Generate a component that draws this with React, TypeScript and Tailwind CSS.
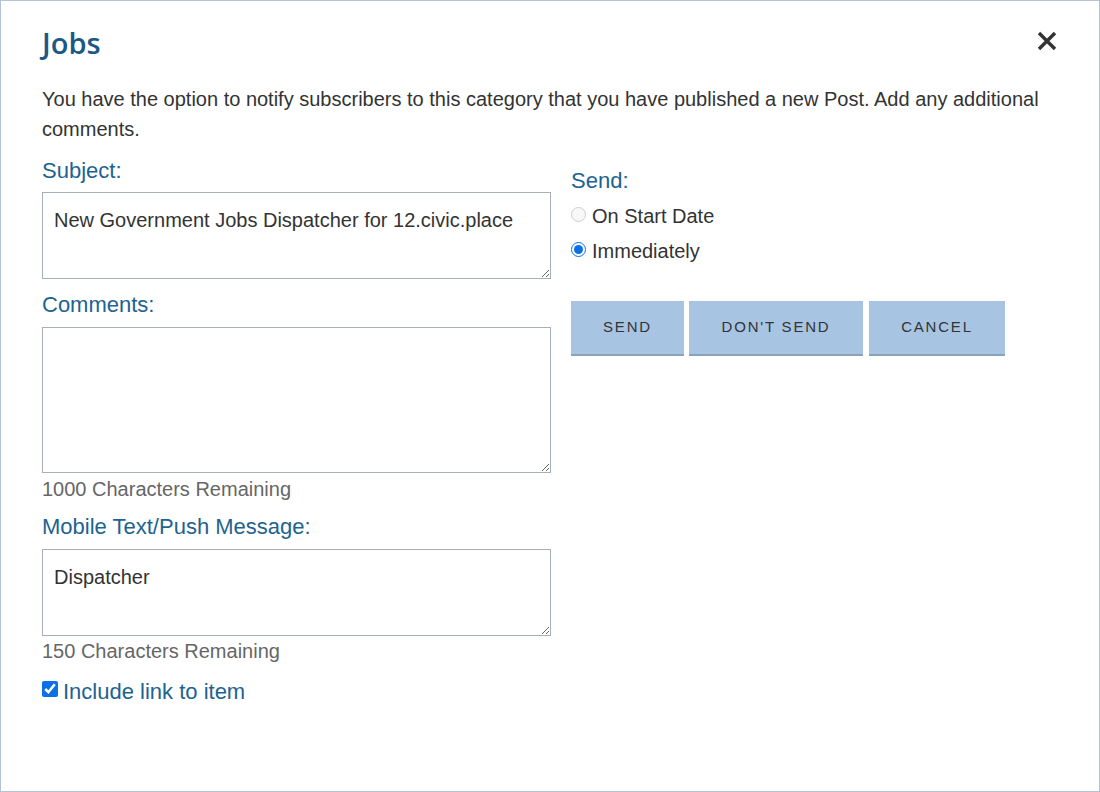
import React from "react";

const font = { fontFamily: '"Liberation Sans", Arial, sans-serif' };

function Area({ value, h }: { value: string; h: string }) {
  return (
    <textarea
      defaultValue={value}
      className={`block w-[509px] ${h} border border-[#a9aebb] px-[11px] py-[14px] text-[20px] leading-[26px] text-[#333] outline-none resize-y`}
      style={font}
    />
  );
}

export default function App() {
  return (
    <div className="w-[1100px] h-[792px] bg-white border border-[#b3c3d3] relative" style={font}>
      <div className="pl-[41px] pr-[40px] pt-[23px]">
        <div className="flex justify-between items-start">
          <h1 className="text-[29px] font-semibold text-[#1b5886] leading-[38px]" style={{ fontFamily: '"Open Sans", sans-serif' }}>Jobs</h1>
          <svg width="22" height="22" viewBox="0 0 22 22" className="mt-[6px] mr-[1px]">
            <path d="M3 3L19 19M19 3L3 19" stroke="#333" strokeWidth="3.4" strokeLinecap="butt" />
          </svg>
        </div>
        <p className="mt-[22px] text-[20px] leading-[30px] text-[#333]">
          You have the option to notify subscribers to this category that you have published a new Post. Add any additional comments.
        </p>
        <div className="flex gap-[20px] mt-[14px]">
          <div className="w-[509px]">
            <label className="block text-[22px] leading-[26px] text-[#1d6391] mb-[8px]">Subject:</label>
            <Area value="New Government Jobs Dispatcher for 12.civic.place" h="h-[87px]" />
            <label className="block text-[22px] leading-[26px] text-[#1d6391] mt-[13px] mb-[9px]">Comments:</label>
            <Area value="" h="h-[146px]" />
            <div className="text-[20px] leading-[24px] text-[#666] mt-[4px]">1000 Characters Remaining</div>
            <label className="block text-[22px] leading-[26px] text-[#1d6391] mt-[13px] mb-[9px]">Mobile Text/Push Message:</label>
            <Area value="Dispatcher" h="h-[87px]" />
            <div className="text-[20px] leading-[24px] text-[#666] mt-[3px]">150 Characters Remaining</div>
            <label className="flex items-center gap-[5px] mt-[16px] text-[22px] leading-[26px] text-[#1d6391]">
              <input type="checkbox" defaultChecked className="w-[16px] h-[16px] accent-[#0b6fe8] -mt-[6px] m-0" />
              Include link to item
            </label>
          </div>
          <div className="pt-[10px]">
            <div className="text-[22px] leading-[26px] text-[#1d6391]">Send:</div>
            <label className="flex items-center gap-[6px] mt-[10px] text-[20px] leading-[24px] text-[#333]">
              <input type="radio" name="s" disabled className="w-[15px] h-[15px] m-0 -mt-[3px]" />
              On Start Date
            </label>
            <label className="flex items-center gap-[6px] mt-[11px] text-[20px] leading-[24px] text-[#333]">
              <input type="radio" name="s" defaultChecked className="w-[15px] h-[15px] m-0 -mt-[3px] accent-[#0b6fe8]" />
              Immediately
            </label>
            <div className="flex gap-[5px] mt-[38px]">
              {[["SEND", "w-[113px]"], ["DON'T SEND", "w-[174px]"], ["CANCEL", "w-[136px]"]].map(([t, w], i) => (
                <button key={t} className={`${w} ${i === 2 ? "ml-[1px]" : ""} h-[55px] bg-[#a7c5e3] border-b-[2px] border-[#8aa2ba] text-[15px] tracking-[1.8px] text-[#333]`} style={font}>
                  {t}
                </button>
              ))}
            </div>
          </div>
        </div>
      </div>
    </div>
  );
}
